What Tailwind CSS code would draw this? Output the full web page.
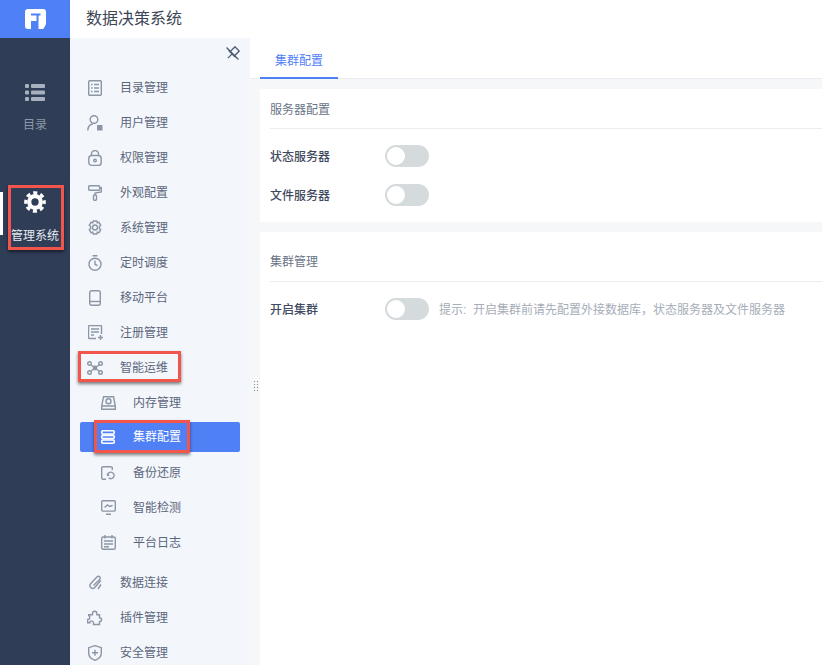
<!DOCTYPE html>
<html lang="zh">
<head>
  <meta charset="UTF-8">
  <title>数据决策系统</title>
  <script src="https://cdn.jsdelivr.net/npm/@tailwindcss/browser@4"></script>
</head>
<body class="font-['Liberation_Sans','Noto_Sans_CJK_SC',sans-serif] text-xs text-[#5b667b] bg-[#f5f7f9] overflow-hidden">
  <div class="flex h-[665px] w-[822px] relative overflow-hidden">

    <!-- left rail -->
    <div class="w-[70px] shrink-0 bg-[#2f3d57] flex flex-col items-center text-[#8d97a8]">
      <div class="w-full h-[38px] bg-[#5080f6] flex items-center justify-center">
        <svg width="21" height="20" viewBox="0 0 21 20"><path fill="#fff" d="M3 0h15a3 3 0 0 1 3 3v12l-2 4a2 2 0 0 1-2 1H3a3 3 0 0 1-3-3V3a3 3 0 0 1 3-3z"/><path fill="#5080f6" d="M6 4.500h9.500v2h-2V12h-2V6.500H6zM6 12h7.500v8H6z"/></svg>
      </div>
      <div class="h-[70px] mt-[32px] flex flex-col items-center">
        <svg class="mt-[14px]" width="20" height="17" viewBox="0 0 20 17" fill="#a9b1be"><rect width="4" height="4" y="0" rx="1"/><rect width="4" height="4" y="6.500" rx="1"/><rect width="4" height="4" y="13" rx="1"/><rect x="6" width="14" height="4" rx="1"/><rect x="6" y="6.500" width="14" height="4" rx="1"/><rect x="6" y="13" width="14" height="4" rx="1"/></svg>
        <span class="mt-[16px]">目录</span>
      </div>
      <div class="mt-[51px] flex flex-col items-center text-white">
        <svg width="22" height="22" viewBox="0 0 24 24" fill="none" stroke="#fff"><circle cx="12" cy="12" r="6.300" stroke-width="4.600"/><circle cx="12" cy="12" r="10" stroke-width="3.600" stroke-dasharray="4.400 3.454" stroke-dashoffset="2.200"/></svg>
        <span class="mt-[15px] text-[#e8ebf0]">管理系统</span>
      </div>
    </div>

    <div class="flex-1 flex flex-col min-w-0">
      <!-- header -->
      <div class="h-[38px] shrink-0 bg-white flex items-center pl-4 text-base text-[#3d4657] shadow-[0_1px_4px_rgba(0,0,0,0.04)] relative">数据决策系统</div>

      <div class="flex-1 flex min-h-0">
        <!-- menu -->
        <div class="w-[180px] shrink-0 bg-[#f3f6fb] pt-[32px] relative">
          <svg class="absolute right-[10px] top-[8px]" width="15" height="15" viewBox="0 0 15 15" fill="none" stroke="#4d5a70" stroke-width="1.300"><g transform="rotate(45 7.500 7.500)"><rect x="4.500" y="1" width="6" height="7"/><path d="M2.500 8h10M7.500 8v6"/></g><path d="M1.500 1.500l12 12"/></svg>

          <div class="h-[35px] flex items-center pl-[18px] gap-[18px]">
            <svg class="w-[14px] h-[16px]" viewBox="0 0 14 16" fill="none" stroke="#8c96a6" stroke-width="1.400"><rect x=".7" y=".7" width="12.600" height="14.600" rx="1"/><path d="M3 4.500h1.500M6 4.500h5M3 8h1.500M6 8h5M3 11.500h1.500M6 11.500h5"/></svg>
            <span>目录管理</span>
          </div>
          <div class="h-[35px] flex items-center pl-[17px] gap-[17px]">
            <svg class="w-[16px] h-[16px]" viewBox="0 0 16 16" fill="none" stroke="#8c96a6" stroke-width="1.400"><circle cx="7" cy="4.500" r="3.800"/><path d="M.8 15.500c0-4 2-6 5.200-6.800"/><rect x="10" y="10" width="5.500" height="5.500" fill="#8c96a6" stroke="none"/></svg>
            <span>用户管理</span>
          </div>
          <div class="h-[35px] flex items-center pl-[18px] gap-[18px]">
            <svg class="w-[14px] h-[16px]" viewBox="0 0 14 16" fill="none" stroke="#8c96a6" stroke-width="1.400"><rect x=".8" y="5.500" width="12.400" height="9.900" rx="3"/><path d="M3.500 5.500V4a3.500 3.500 0 0 1 7 0v1.500"/><circle cx="7" cy="10.500" r="1.300"/></svg>
            <span>权限管理</span>
          </div>
          <div class="h-[35px] flex items-center pl-[18px] gap-[18px]">
            <svg class="w-[14px] h-[16px]" viewBox="0 0 14 16" fill="none" stroke="#8c96a6" stroke-width="1.400"><rect x=".7" y=".7" width="11" height="4.500" rx="1"/><path d="M11.500 2.800h1.800v4.200l-6.300 1v2"/><rect x="5.500" y="10" width="3" height="5.300" rx="1"/></svg>
            <span>外观配置</span>
          </div>
          <div class="h-[35px] flex items-center pl-[17px] gap-[17px]">
            <svg class="w-[16px] h-[16px]" viewBox="0 0 16 16" fill="none" stroke="#8c96a6" stroke-width="1.400"><path d="M6.300 1h3.400l.6 1.800 1.700-.4 1.700 2.900-1.300 1.300v1.800l1.300 1.300-1.700 2.900-1.700-.4-.6 1.800H6.300l-.6-1.800-1.700.4-1.700-2.900 1.300-1.300V6.600L2.300 5.300 4 2.400l1.700.4z"/><circle cx="8" cy="7.500" r="2.500"/></svg>
            <span>系统管理</span>
          </div>
          <div class="h-[35px] flex items-center pl-[18px] gap-[18px]">
            <svg class="w-[14px] h-[16px]" viewBox="0 0 14 16" fill="none" stroke="#8c96a6" stroke-width="1.400"><circle cx="7" cy="9.200" r="6"/><path d="M4.500.7h5M7 5.500v4l2.500 1"/></svg>
            <span>定时调度</span>
          </div>
          <div class="h-[35px] flex items-center pl-[19px] gap-[19px]">
            <svg class="w-[12px] h-[16px]" viewBox="0 0 12 16" fill="none" stroke="#8c96a6" stroke-width="1.400"><rect x=".7" y=".7" width="10.600" height="14.600" rx="2"/><path d="M1 11.500h10"/></svg>
            <span>移动平台</span>
          </div>
          <div class="h-[35px] flex items-center pl-[18px] gap-[17px]">
            <svg class="w-[15px] h-[15px]" viewBox="0 0 15 15" fill="none" stroke="#8c96a6" stroke-width="1.400"><path d="M8 13.500H1.500a1 1 0 0 1-1-1V1.500a1 1 0 0 1 1-1h11a1 1 0 0 1 1 1V9"/><path d="M3 4h8M3 7h8M3 10h3M10 12.500h5M12.500 10v5"/></svg>
            <span>注册管理</span>
          </div>
          <div class="h-[35px] flex items-center pl-[17px] gap-[17px]">
            <svg class="w-[16px] h-[14px]" viewBox="0 0 16 14" fill="none" stroke="#8c96a6" stroke-width="1.400"><circle cx="2.500" cy="2.500" r="1.800"/><circle cx="13.500" cy="2.500" r="1.800"/><circle cx="2.500" cy="11.500" r="1.800"/><circle cx="13.500" cy="11.500" r="1.800"/><circle cx="8" cy="7" r="1.700" fill="#8c96a6"/><path d="M4 4l3 2M12 4L9 6M4 10l3-2M12 10L9 8"/></svg>
            <span>智能运维</span>
          </div>

          <div class="h-[35px] flex items-center pl-[31px] gap-[17px]">
            <svg class="w-[15px] h-[14px]" viewBox="0 0 15 14" fill="none" stroke="#8c96a6" stroke-width="1.400"><path d="M2.500.7h10l1.800 9.400v3.200H.7v-3.200zM.7 10h13.600"/><circle cx="7.500" cy="5.200" r="2.500"/></svg>
            <span>内存管理</span>
          </div>
          <div class="h-[30px] mt-[2px] mb-[3px] mx-[10px] bg-[#5080f6] rounded-[2px] flex items-center pl-[21px] gap-[18px] text-white">
            <svg class="w-[14px] h-[14px]" viewBox="0 0 14 14" fill="none" stroke="#fff" stroke-width="1.600"><rect x=".8" y=".8" width="12.400" height="3.200" rx="1"/><rect x=".8" y="5.400" width="12.400" height="3.200" rx="1"/><rect x=".8" y="10" width="12.400" height="3.200" rx="1"/></svg>
            <span>集群配置</span>
          </div>
          <div class="h-[35px] flex items-center pl-[31px] gap-[18px]">
            <svg class="w-[14px] h-[14px]" viewBox="0 0 14 14" fill="none" stroke="#8c96a6" stroke-width="1.400"><path d="M5 13.300H2A1.300 1.300 0 0 1 .7 12V2A1.300 1.300 0 0 1 2 .7h8A1.300 1.300 0 0 1 11.300 2v2"/><path d="M6.500 9a3.300 3.300 0 1 1 1 2.800M6.500 7.500V9.300h1.800"/></svg>
            <span>备份还原</span>
          </div>
          <div class="h-[35px] flex items-center pl-[31px] gap-[17px]">
            <svg class="w-[15px] h-[15px]" viewBox="0 0 15 15" fill="none" stroke="#8c96a6" stroke-width="1.400"><rect x=".7" y=".7" width="13.600" height="10.400" rx="1"/><path d="M5 14.300h5M3.500 7.500l3-2.500 2 1.500 3-1"/></svg>
            <span>智能检测</span>
          </div>
          <div class="h-[35px] flex items-center pl-[31px] gap-[17px]">
            <svg class="w-[15px] h-[15px]" viewBox="0 0 15 15" fill="none" stroke="#8c96a6" stroke-width="1.400"><rect x=".7" y="2" width="13.600" height="12.300" rx="1.500"/><path d="M4 0v3.500M11 0v3.500M3 6h9M3 9h9M3 11.800h5"/></svg>
            <span>平台日志</span>
          </div>

          <div class="h-[35px] mt-[5px] flex items-center pl-[18px] gap-[18px]">
            <svg class="w-[14px] h-[16px]" viewBox="0 0 14 16" fill="none" stroke="#8c96a6" stroke-width="1.400"><path d="M12.800 5.500l-6 7a2.800 2.800 0 0 1-4.200-3.700l6.500-7a1.800 1.800 0 0 1 2.700 2.400L5.500 10.500"/><path d="M13 9.500l-3 4.500"/></svg>
            <span>数据连接</span>
          </div>
          <div class="h-[35px] flex items-center pl-[17px] gap-[17px]">
            <svg class="w-[16px] h-[16px]" viewBox="0 0 16 16" fill="none" stroke="#8c96a6" stroke-width="1.400"><path d="M5.500 3.500a2.200 2.200 0 0 1 4.400 0v1.300h2.600v3a2 2 0 0 1 0 4v2.700H6.500v-1.800a1.800 1.800 0 0 0-3.600 0H.7V9.500a2 2 0 0 0 1-3.800V4.800h3.800z"/></svg>
            <span>插件管理</span>
          </div>
          <div class="h-[35px] flex items-center pl-[18px] gap-[18px]">
            <svg class="w-[14px] h-[16px]" viewBox="0 0 14 16" fill="none" stroke="#8c96a6" stroke-width="1.400"><path d="M7 .7l6.300 2v5.500c0 3.500-2.700 5.800-6.300 7.100C3.400 14 .7 11.700.7 8.200V2.700z"/><path d="M7 4.800v6M4 7.800h6"/></svg>
            <span>安全管理</span>
          </div>
        </div>

        <!-- main -->
        <div class="flex-1 flex flex-col min-w-0 relative">
          <div class="h-[41px] shrink-0 bg-white border-b border-[#e9edf2] pl-[10px] flex">
            <div class="w-[78px] h-[41px] pt-[6px] border-b-2 border-[#5080f6] text-[#5080f6] flex items-center justify-center">集群配置</div>
          </div>

          <div class="flex-1 pl-[10px] pt-[10px] flex flex-col gap-[10px]">
            <div class="h-[133px] bg-white pl-[10px]">
              <div class="h-[40px] pt-[2px] flex items-center border-b border-[#e9edf2] text-[#6a7486]">服务器配置</div>
              <div class="h-[56px] flex items-center">
                <span class="w-[115px] font-medium text-[#3f4a60]">状态服务器</span>
                <div class="w-[44px] h-[22px] mb-[2px] rounded-full bg-[#d5dadc] p-[2px]"><div class="w-[18px] h-[18px] rounded-full bg-white"></div></div>
              </div>
              <div class="h-[22px] flex items-center">
                <span class="w-[115px] font-medium text-[#3f4a60]">文件服务器</span>
                <div class="w-[44px] h-[22px] -mt-[2px] rounded-full bg-[#d5dadc] p-[2px]"><div class="w-[18px] h-[18px] rounded-full bg-white"></div></div>
              </div>
            </div>
            <div class="flex-1 bg-white pl-[10px]">
              <div class="h-[50px] pt-[20px] border-b border-[#e9edf2] text-[#6a7486] leading-5">集群管理</div>
              <div class="h-[55px] flex items-center">
                <span class="w-[115px] font-medium text-[#3f4a60]">开启集群</span>
                <div class="w-[44px] h-[22px] mb-[2px] rounded-full bg-[#d5dadc] p-[2px]"><div class="w-[18px] h-[18px] rounded-full bg-white"></div></div>
                <span class="ml-[10px] text-[#a6adb8]">提示:&nbsp;&nbsp;开启集群前请先配置外接数据库，状态服务器及文件服务器</span>
              </div>
            </div>
          </div>

          <!-- drag grip -->
          <div class="absolute left-[3px] top-[342px] w-[6px] h-[12px] bg-[radial-gradient(#7f8895_1px,transparent_1px)] bg-[length:3px_3px]"></div>
        </div>
      </div>
    </div>

    <!-- annotations -->
    <div class="absolute left-0 top-[192px] w-[3px] h-[43px] bg-white"></div>
    <div class="absolute left-[8px] top-[185px] w-[56px] h-[65px] border-[3px] border-[#f2554c] shadow-[0_2px_3px_rgba(0,0,0,0.5)]"></div>
    <div class="absolute left-[78px] top-[351px] w-[103px] h-[31px] border-[3px] border-[#f2554c] shadow-[0_2px_3px_rgba(0,0,0,0.5)]"></div>
    <div class="absolute left-[94px] top-[420px] w-[96px] h-[33px] border-[3px] border-[#f2554c] shadow-[0_2px_3px_rgba(0,0,0,0.5)]"></div>
  </div>
</body>
</html>
